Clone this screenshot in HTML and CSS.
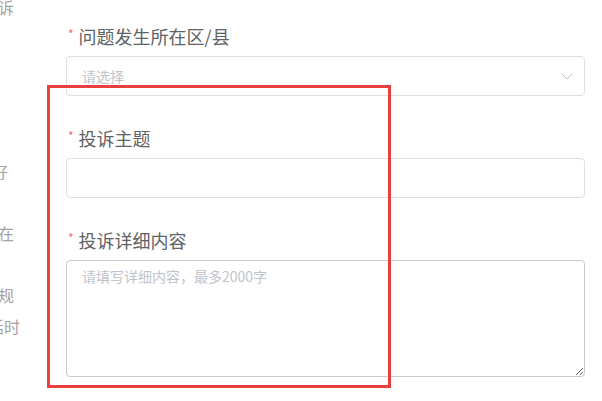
FILE: index.html
```html
<!DOCTYPE html>
<html lang="zh">
<head>
<meta charset="utf-8">
<link rel="stylesheet" href="styles.css">
</head>
<body>
<div class="page">
  <div class="side">
    <div class="s-first"><span class="s-text e14">投诉</span></div>
    <div class="s-group">
      <div class="s-line"><span class="s-text e8">好</span></div>
      <div class="s-line"></div>
      <div class="s-line"><span class="s-text e14">存在</span></div>
      <div class="s-line"></div>
      <div class="s-line"><span class="s-text e14">法规</span></div>
      <div class="s-line"><span class="s-text e20">话时</span></div>
    </div>
  </div>
  <form class="form">
    <div class="item">
      <label class="label"><span class="star">*</span>问题发生所在区/县</label>
      <div class="select">
        <span class="placeholder">请选择</span>
        <svg class="arrow" width="12" height="7" viewBox="0 0 12 7"><polyline points="0.5,0.5 6,6 11.5,0.5" fill="none" stroke="#c0c4cc" stroke-width="1"/></svg>
      </div>
    </div>
    <div class="item">
      <label class="label"><span class="star">*</span>投诉主题</label>
      <input class="input" type="text">
    </div>
    <div class="item">
      <label class="label"><span class="star">*</span>投诉详细内容</label>
      <textarea class="textarea" placeholder="请填写详细内容，最多2000字"></textarea>
    </div>
  </form>
  <div class="highlight"></div>
</div>
</body>
</html>
```
FILE: styles.css
```css
html, body {
  margin: 0;
  padding: 0;
  background: #fff;
}
body {
  font-family: "Noto Sans CJK SC", "Microsoft YaHei", sans-serif;
  width: 602px;
  height: 401px;
  overflow: hidden;
}
.page {
  position: relative;
  display: flex;
  height: 401px;
}
.side {
  flex: none;
  width: 66px;
  overflow: hidden;
  color: #a3a3a3;
  font-size: 16px;
}
.s-first {
  height: 14px;
  line-height: 14px;
  position: relative;
}
.s-group {
  margin-top: 142px;
}
.s-line {
  height: 31px;
  line-height: 31px;
  position: relative;
}
.s-text {
  position: absolute;
  white-space: nowrap;
  top: 0;
}
.e14 { right: 52px; }
.e8 { right: 58px; }
.e20 { right: 46px; }

.form {
  flex: none;
  width: 519px;
  padding-top: 24px;
  margin: 0;
}
.item {
  margin-bottom: 30px;
}
.label {
  display: flex;
  align-items: center;
  height: 24px;
  line-height: 24px;
  font-size: 18px;
  color: #606266;
  margin-bottom: 8px;
  padding-left: 2px;
}
.star {
  color: #f56c6c;
  font-size: 12px;
  line-height: 12px;
  margin-right: 5px;
  align-self: flex-start;
  margin-top: 4px;
}
.select, .input {
  box-sizing: border-box;
  display: flex;
  align-items: center;
  width: 519px;
  height: 40px;
  border: 1px solid #dcdfe6;
  border-radius: 4px;
  padding: 0 15px;
  background: #fff;
  font-family: inherit;
  font-size: 14px;
  outline: none;
}
.select {
  justify-content: space-between;
  padding-right: 11px;
}
.placeholder {
  color: #c0c4cc;
  font-size: 14px;
}
.arrow {
  display: block;
}
.textarea {
  box-sizing: border-box;
  display: block;
  width: 519px;
  height: 117px;
  margin: 0;
  border: 1px solid #c8c9cc;
  border-radius: 4px;
  padding: 5px 15px;
  font-family: inherit;
  font-size: 14px;
  line-height: 21px;
  color: #606266;
  resize: vertical;
  outline: none;
}
.textarea::placeholder {
  color: #c0c4cc;
}
.highlight {
  position: absolute;
  left: 47px;
  top: 85px;
  width: 344px;
  height: 303px;
  box-sizing: border-box;
  border: 3px solid #e8403f;
  pointer-events: none;
}
```
